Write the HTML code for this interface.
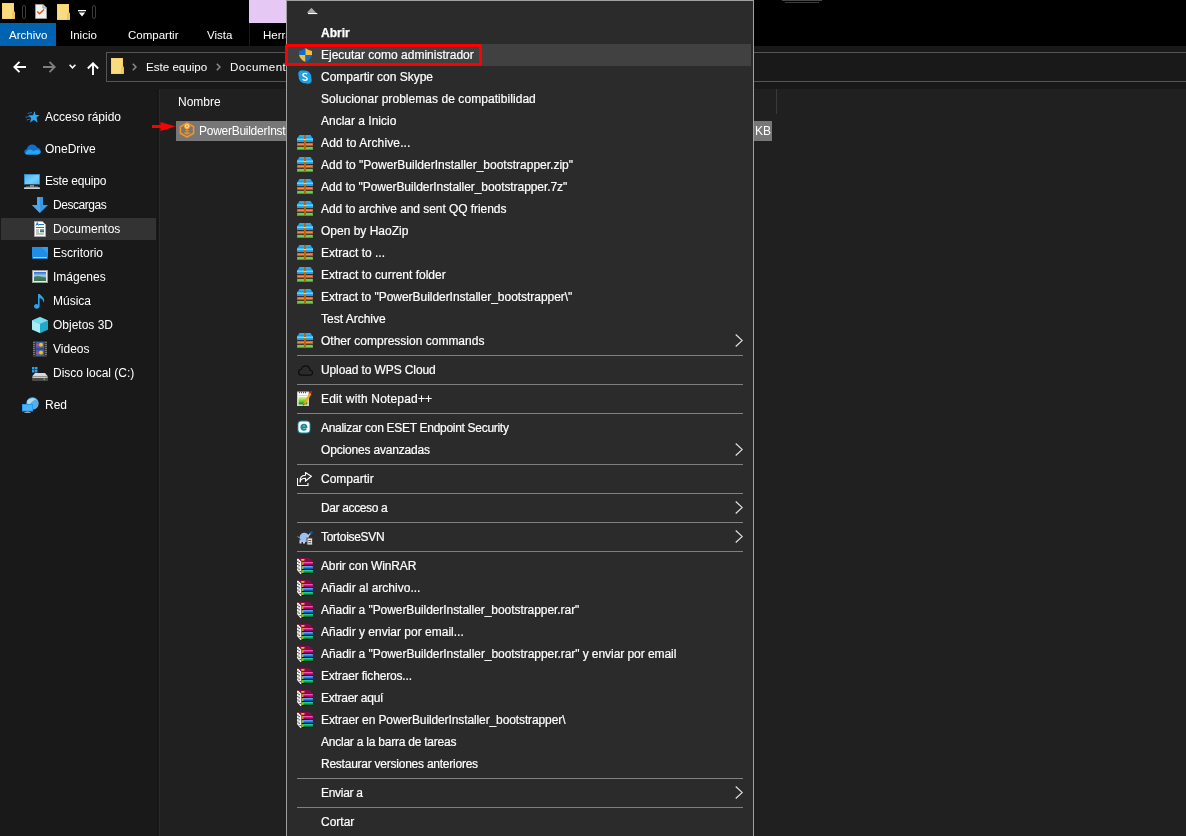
<!DOCTYPE html>
<html><head><meta charset="utf-8">
<style>
*{margin:0;padding:0;box-sizing:border-box}
html,body{width:1186px;height:836px;overflow:hidden;-webkit-font-smoothing:antialiased;background:#202020;font-family:"Liberation Sans",sans-serif;font-size:12px;color:#fff}
.a{position:absolute;will-change:transform}
#title{left:0;top:0;width:1186px;height:23px;background:#000}
#tabs{left:0;top:23px;width:1186px;height:23px;background:#000}
.tab{will-change:transform;position:absolute;top:24px;height:23px;line-height:23px;color:#fff;font-size:11.5px}
#nav{left:0;top:46px;width:1186px;height:43px;background:#191919}
#addr{left:106px;top:52px;width:1100px;height:30px;border:1px solid #555;background:#191919}
#side{left:0;top:89px;width:159px;height:747px;background:#191919}
#content{left:159px;top:89px;width:1027px;height:747px;background:#202020;border-left:1px solid #2a2a2a}
.si{will-change:transform;position:absolute;left:45px;margin-top:1px;height:22px;line-height:22px;color:#fff;white-space:nowrap}
#menu{left:286px;top:0;width:468px;height:840px;background:#2b2b2b;border:1px solid #a0a0a0;border-bottom:none}
.mi{-webkit-text-stroke:0.2px #fff;will-change:transform;position:absolute;left:321px;margin-top:1px;height:22px;line-height:22px;color:#fff;white-space:nowrap}
.sep{position:absolute;left:297px;width:446px;height:1px;background:#808080}
.ic{position:absolute;left:297px}
.chev{position:absolute;left:735px}
svg.i{position:absolute;overflow:visible}
</style></head><body>
<svg width="0" height="0" style="position:absolute">
<defs>
<symbol id="hz" viewBox="0 0 16 15">
<path d="M2.5 0H13.5L16 3.5V7H0V3.5Z" fill="#1e9ee0"/>
<rect x="0" y="3.5" width="16" height="1.6" fill="#6ad6ff"/>
<rect x="2.5" y="0.5" width="11" height="1" fill="#3cbcf0"/>
<rect x="0" y="7" width="16" height="0.8" fill="#1a1a1a" opacity=".5"/>
<rect x="0" y="7.8" width="16" height="3.4" fill="#d8432a"/>
<rect x="0.5" y="8.6" width="15" height="1.2" fill="#f59a5a"/>
<rect x="0" y="11.2" width="16" height="0.6" fill="#1a1a1a" opacity=".5"/>
<rect x="0" y="11.8" width="16" height="3.2" fill="#3aa82a"/>
<rect x="0.5" y="12.4" width="15" height="1.2" fill="#8ee860"/>
<rect x="7" y="0" width="2" height="15" fill="#b8660e"/>
<rect x="7" y="4" width="2" height="1.2" fill="#ffd040"/>
</symbol>
<symbol id="wr" viewBox="0 0 16 16">
<path d="M0 0.8L1.8 0.8L4.6 3.8V16H3.4L0 12Z" fill="#f4f4f4"/>
<path d="M0.3 3.3h1.1M1.6 4.6h1.1M0.3 6.6h1.1M1.6 7.8h1.1M0.3 10h1.1M1.6 11.2h1.1M2.6 13.6h1.1" stroke="#111" stroke-width="1"/>
<path d="M0.8 0H12.5L16 3.8H4.5Z" fill="#8c0846"/>
<ellipse cx="5.8" cy="1.8" rx="2" ry="0.9" fill="#d8dc00"/>
<rect x="4.5" y="3.8" width="11.5" height="3.4" fill="#a3005c"/>
<rect x="5.5" y="4.2" width="10.3" height="1.1" fill="#ff6ad0"/>
<rect x="4.5" y="7.2" width="11.5" height="0.8" fill="#050505"/>
<rect x="4.5" y="8" width="11.5" height="3.2" fill="#0b58b8"/>
<rect x="5.5" y="8.3" width="10.3" height="1.1" fill="#6cc8ff"/>
<rect x="4.5" y="11.2" width="11.5" height="0.8" fill="#050505"/>
<rect x="4.5" y="12" width="11.5" height="3.3" fill="#0a7c3c"/>
<rect x="5.5" y="12.3" width="10.3" height="1.1" fill="#38eca8"/>
<rect x="4.5" y="15.3" width="11.5" height="0.7" fill="#050505"/>
<path d="M5.8 4.4V7M5.8 8.5V11M5.8 12.5V15" stroke="#e0d400" stroke-width="1"/>
</symbol>
<symbol id="shield" viewBox="0 0 13 14">
<path d="M6.5 0L6.5 7H0V3Q3.5 2.5 6.5 0Z" fill="#0a6ed6"/>
<path d="M6.5 0Q9.5 2.5 13 3V7H6.5Z" fill="#fbbc2c"/>
<path d="M0 7H6.5V14Q1 11.5 0 7Z" fill="#fbbc2c"/>
<path d="M6.5 7H13Q12 11.5 6.5 14Z" fill="#0a6ed6"/>
</symbol>
<symbol id="skype" viewBox="0 0 14 14">
<path d="M4 0.3C5 0.3 5.6 0.7 6.3 0.6C10.5 0.3 13.6 3.8 13.2 8C13.5 8.7 13.8 9.2 13.8 10C13.8 12.2 12 13.8 10 13.8C9.2 13.8 8.6 13.5 8 13.2C3.8 13.6 0.4 10.3 0.7 6.2C0.5 5.5 0.2 4.8 0.2 4C0.2 1.9 1.9 0.3 4 0.3Z" fill="#1fa0e4"/>
<path d="M9.1 4.2C8.7 3.6 8 3.4 7 3.4C5.7 3.4 4.9 4.1 4.9 5.1C4.9 7.3 9.2 6.3 9.2 8.6C9.2 9.7 8.3 10.3 7 10.3C5.8 10.3 5 9.9 4.6 9.2" fill="none" stroke="#fff" stroke-width="1.35"/>
</symbol>
<symbol id="cloud" viewBox="0 0 14 10">
<path d="M3.2 9.3H11.2C12.6 9.3 13.5 8.3 13.5 7C13.5 5.7 12.5 4.7 11.2 4.8C10.9 2.3 9.2 0.7 7 0.7C5 0.7 3.6 2 3.2 3.8C1.6 3.9 0.5 5 0.5 6.6C0.5 8.1 1.7 9.3 3.2 9.3Z" fill="none" stroke="#0c0c0c" stroke-width="1.1"/>
</symbol>
<symbol id="npp" viewBox="0 0 15 15">
<rect x="0.5" y="1" width="11" height="13.5" fill="#fff" stroke="#cfcfcf" stroke-width="1"/>
<path d="M2 1.5h1M4 1.5h1M6 1.5h1M8 1.5h1" stroke="#555" stroke-width="1.4"/>
<rect x="1.5" y="4" width="9" height="1" fill="#c9d8ee"/>
<linearGradient id="npg" x1="0" y1="0" x2="0" y2="1"><stop offset="0" stop-color="#d8f590"/><stop offset=".6" stop-color="#5ccf20"/><stop offset="1" stop-color="#0b7a0b"/></linearGradient>
<rect x="1.5" y="6" width="9" height="7.5" fill="url(#npg)"/>
<path d="M7 13.5L13.5 2.5" stroke="#f5a300" stroke-width="2.2"/>
<path d="M6.3 14.5L7.2 12.6" stroke="#7a4a00" stroke-width="1"/>
<path d="M12.6 2.5L14 0.8" stroke="#8a8aa0" stroke-width="1.6"/>
<circle cx="14" cy="0.9" r="1.2" fill="#d01010"/>
</symbol>
<symbol id="eset" viewBox="0 0 14 14">
<rect x="0.5" y="0.5" width="13" height="13" rx="3.8" fill="#138aa0"/>
<rect x="1.4" y="1.4" width="11.2" height="11.2" rx="3" fill="#fff"/>
<path d="M4.6 7.3H9.4C9.5 5.6 8.6 4.6 7 4.6C5.5 4.6 4.4 5.7 4.4 7.2C4.4 8.7 5.4 9.7 7.1 9.7C8 9.7 8.7 9.4 9.2 8.9" fill="none" stroke="#138aa0" stroke-width="1.9"/>
</symbol>
<symbol id="share" viewBox="0 0 15 14">
<path d="M0.5 6V13.5H11V11" fill="none" stroke="#fff" stroke-width="1.1"/>
<path d="M3.2 10.5C3.2 7.5 5.2 6.3 8.5 6.3V9L14.3 4.3L8.5 0.5V3.2C4.5 3.2 2.5 6 3.2 10.5Z" fill="none" stroke="#fff" stroke-width="1.1" stroke-linejoin="miter"/>
</symbol>
<symbol id="svn" viewBox="0 0 16 14">
<path d="M0.5 5.5L3 7" stroke="#8fa0c0" stroke-width="1"/>
<ellipse cx="7.3" cy="6" rx="4.6" ry="4.3" fill="#9cc0f4"/>
<path d="M2.5 8.5H12V11H2.5Z" fill="#9cc0f4"/>
<rect x="2.5" y="10.5" width="2" height="2" fill="#cdd8ec"/>
<rect x="6" y="10.5" width="2" height="2" fill="#cdd8ec"/>
<rect x="9.5" y="6.5" width="6.5" height="7.5" fill="#4a4038"/>
<rect x="10.5" y="7.5" width="4.5" height="6" fill="#e8e8e8"/>
<rect x="11.3" y="9" width="3" height="1" fill="#555"/>
<rect x="11.3" y="11.2" width="3" height="1" fill="#555"/>
<path d="M10 6L14 2" stroke="#c0c8d8" stroke-width="1.2"/>
<circle cx="14.3" cy="1.6" r="1.5" fill="#0a5a9a"/>
</symbol>
<symbol id="fold" viewBox="0 0 14 16">
<rect x="0" y="0" width="12" height="16" fill="#f6d06a"/>
<rect x="0.8" y="0.8" width="10.4" height="14.4" fill="#f9db80"/>
<path d="M10.3 9.2L13 8.6V16H10.3Z" fill="#e8b94c"/>
<rect x="11" y="9.8" width="1.5" height="5.5" fill="#f4cc62"/>
</symbol>
<symbol id="tsep" viewBox="0 0 4 14">
<rect x="0.5" y="0.5" width="3" height="13" rx="1.5" fill="none" stroke="#3c3c3c" stroke-width="1"/>
</symbol>
<symbol id="tdoc" viewBox="0 0 12 15">
<path d="M0.5 0.5H8L11.5 4V14.5H0.5Z" fill="#f2f2f2" stroke="#9a9a9a" stroke-width="1"/>
<path d="M8 0.5V4H11.5" fill="#ddd" stroke="#9a9a9a" stroke-width="1"/>
<path d="M2.3 7.5L4.5 9.8L9 5.5" fill="none" stroke="#e8541a" stroke-width="1.4"/>
</symbol>
<symbol id="dd" viewBox="0 0 8 7">
<rect x="0" y="0" width="8" height="1.3" fill="#fff"/>
<path d="M0.8 2.5H7.2L4 6.5Z" fill="#fff"/>
</symbol>
<symbol id="back" viewBox="0 0 13 12">
<path d="M13 6H1.5M6.5 0.8L1.3 6L6.5 11.2" fill="none" stroke-width="1.9"/>
</symbol>
<symbol id="up" viewBox="0 0 12 13">
<path d="M6 13V1.5M0.8 6.5L6 1.3L11.2 6.5" fill="none" stroke="#fff" stroke-width="1.9"/>
</symbol>
<symbol id="cdown" viewBox="0 0 7 5">
<path d="M0.6 0.8L3.5 3.8L6.4 0.8" fill="none" stroke="#fff" stroke-width="1.5"/>
</symbol>
<symbol id="bc" viewBox="0 0 5 8">
<path d="M0.8 0.7L4 4L0.8 7.3" fill="none" stroke="#8a8a8a" stroke-width="1.5"/>
</symbol>
<symbol id="star" viewBox="0 0 15 12">
<path d="M9.5 0L10.7 4H14.6L11.5 6.5L12.6 11.8L8.8 8.8L5 11.8L6.2 7.2L3.4 4.3H8Z" fill="#2ba9f2"/>
<path d="M2.5 2.5L7 1.5M0.5 6.2L5 5.5M1.5 9L5.2 8" stroke="#1a7ec8" stroke-width="0.9"/>
</symbol>
<symbol id="od" viewBox="0 0 17 11">
<path d="M3.2 10.5C1.5 10.5 0.3 9.4 0.3 7.8C0.3 6.3 1.4 5.3 2.8 5.2C3.3 2.3 5.6 0.5 8.3 0.5C10.5 0.5 12.2 1.7 13 3.6C15 3.7 16.7 5.3 16.7 7.3C16.7 9.2 15.2 10.5 13.4 10.5Z" fill="#0f6fd0"/>
<path d="M1 9.8C1.8 10.3 2.4 10.5 3.2 10.5H13.4C15 10.5 16.4 9.5 16.7 7.8C16 6.5 14.7 5.7 13.2 5.7C11.5 5.7 10.5 6.6 9.6 7.4C8.7 6.6 7.5 5.6 5.8 5.6C3.8 5.6 2.5 7.2 1 9.8Z" fill="#2aa5ec"/>
</symbol>
<symbol id="pc" viewBox="0 0 16 15">
<linearGradient id="pcg" x1="0" y1="0" x2="1" y2="1"><stop offset="0" stop-color="#3fb0f5"/><stop offset=".55" stop-color="#78cdfa"/><stop offset="1" stop-color="#4ab6f7"/></linearGradient>
<rect x="0.3" y="0.3" width="15.4" height="10.2" fill="url(#pcg)" stroke="#2a8fd8" stroke-width=".6"/>
<rect x="0" y="10.5" width="16" height="0.8" fill="#2a2a2a"/>
<rect x="6" y="11.3" width="4" height="1.2" fill="#bfbfbf"/>
<rect x="2" y="12.5" width="12" height="0.8" fill="#8a8a8a"/>
<rect x="0" y="13.3" width="16" height="1.7" rx=".6" fill="#d0d0d0"/>
</symbol>
<symbol id="dl" viewBox="0 0 16 16">
<path d="M5 0H11V8H16L8 16L0 8H5Z" fill="#3597e6"/>
<path d="M5 0H8V16L0 8H5Z" fill="#4aa6ee"/>
</symbol>
<symbol id="docs" viewBox="0 0 12 16">
<path d="M0.5 0.5H8.5L11.5 3.5V15.5H0.5Z" fill="#fff" stroke="#a8a8a8" stroke-width="1"/>
<path d="M2 4.5L3.3 1.5L4.6 4.5M2.5 3.5H4" fill="none" stroke="#1a78d0" stroke-width="1"/>
<rect x="5" y="3" width="5" height="1" fill="#1a78d0"/>
<rect x="2" y="6" width="8" height="1" fill="#1a78d0"/>
<rect x="2" y="8.5" width="3" height="1" fill="#888"/>
<rect x="6" y="8.3" width="4" height="3" fill="#3c7850"/>
<rect x="6" y="8.3" width="4" height="1.2" fill="#6aaedc"/>
<rect x="2" y="10.5" width="3" height="1" fill="#888"/>
<rect x="2" y="12.5" width="8" height="1" fill="#888"/>
</symbol>
<symbol id="desk" viewBox="0 0 16 12">
<rect x="0" y="0" width="16" height="12" fill="#1e8ee8"/>
<path d="M9 0H16V7Z" fill="#38a8f4" opacity=".6"/>
<rect x="0" y="10" width="16" height="2" fill="#0f6ec0"/>
<rect x="1" y="10.3" width="14" height="0.8" fill="#e8f4ff"/>
</symbol>
<symbol id="img" viewBox="0 0 16 13">
<rect x="0.5" y="0.5" width="15" height="12" fill="#e8e8e8" stroke="#9a9a9a" stroke-width="1"/>
<linearGradient id="skg" x1="0" y1="0" x2="0" y2="1"><stop offset="0" stop-color="#2a6ad0"/><stop offset=".45" stop-color="#a8d0f0"/><stop offset=".6" stop-color="#5a9a6a"/><stop offset="1" stop-color="#1a4a3a"/></linearGradient>
<rect x="2" y="2" width="12" height="9" fill="url(#skg)"/>
<path d="M2 7C5 5 8 6 14 8V11H2Z" fill="#3a7a5a" opacity=".8"/>
</symbol>
<symbol id="music" viewBox="0 0 12 16">
<path d="M4 1V11.5C3.5 11.2 3 11 2.3 11C1 11 0 12 0 13.3C0 14.6 1.2 15.7 2.7 15.7C4.3 15.7 5.6 14.5 5.6 13V5C7.5 5.5 9.5 7 9.8 9.8C11.5 6 8.5 3.5 5.6 1Z" fill="#2aa2ee"/>
</symbol>
<symbol id="cube" viewBox="0 0 16 16">
<path d="M8 0L16 3.5V12.5L8 16L0 12.5V3.5Z" fill="#3cc0d8"/>
<path d="M0 3.5L8 7V16L0 12.5Z" fill="#a8ecf4"/>
<path d="M8 0L16 3.5L8 7L0 3.5Z" fill="#7adcec"/>
<path d="M8 7L16 3.5V12.5L8 16Z" fill="#22a8c8"/>
</symbol>
<symbol id="vid" viewBox="0 0 14 16">
<rect x="0" y="0" width="14" height="16" fill="#3a3a3a"/>
<path d="M1 1v14M13 1v14" stroke="#9a9a9a" stroke-width="1.2" stroke-dasharray="1 1"/>
<rect x="3" y="1" width="8" height="6.5" fill="#3a60c0"/>
<rect x="3" y="8.5" width="8" height="6.5" fill="#3a60c0"/>
<circle cx="8" cy="3.8" r="2" fill="#f0c020"/>
<circle cx="8" cy="11.5" r="2" fill="#f0c020"/>
<rect x="3.5" y="3" width="2.5" height="2" fill="#e04a30"/>
<rect x="3.5" y="11" width="2.5" height="2" fill="#e04a30"/>
</symbol>
<symbol id="disk" viewBox="0 0 16 14">
<rect x="0" y="0" width="2.5" height="2.5" fill="#29a0f0"/><rect x="3" y="0" width="2.5" height="2.5" fill="#29a0f0"/>
<rect x="0" y="3" width="2.5" height="2.5" fill="#29a0f0"/><rect x="3" y="3" width="2.5" height="2.5" fill="#29a0f0"/>
<path d="M3 6H13L16 9.5H0Z" fill="#d8d8d8"/>
<rect x="0" y="9.5" width="16" height="4.5" rx=".8" fill="#4a4a4a"/>
<rect x="0.5" y="9.5" width="15" height="1.5" fill="#c8c8c8"/>
<rect x="11.5" y="11.5" width="1.6" height="1.4" fill="#30d050"/>
</symbol>
<symbol id="net" viewBox="0 0 18 16">
<circle cx="10.5" cy="6.5" r="6.2" fill="#5aaee6"/>
<path d="M5 4C7 1.5 11 0.5 14 2C12 3 9 5 7 8C5.5 7 5 5.5 5 4Z" fill="#a8dcf8"/>
<rect x="0" y="7" width="11" height="7.5" fill="#2a9af0"/>
<rect x="1" y="8" width="9" height="5.5" fill="#4ab4f8"/>
<rect x="4.5" y="14.5" width="2" height="0.8" fill="#bbb"/>
<rect x="2.5" y="15.2" width="6" height="0.8" fill="#bbb"/>
</symbol>
<symbol id="pb" viewBox="0 0 16 16">
<path d="M8 1L14.6 4.7V11.3L8 15L1.4 11.3V4.7Z" fill="none" stroke="#f7941d" stroke-width="1.6"/>
<circle cx="8" cy="4.2" r="3" fill="#f7941d"/>
<circle cx="8" cy="4.2" r="2.2" fill="#fde2c0"/>
<path d="M6.8 5.5L8 2.8L9.2 5.5M7.3 4.7H8.7" fill="none" stroke="#f7941d" stroke-width=".8"/>
<path d="M8 7.2V12.5M5.5 10.5Q8 13 10.5 10.5M6.5 8.5H9.5" fill="none" stroke="#f7941d" stroke-width="1.1"/>
</symbol>
<symbol id="chev" viewBox="0 0 8 13">
<path d="M0.7 0.5L7.3 6.5L0.7 12.5" fill="none" stroke="#e6e6e6" stroke-width="1.1"/>
</symbol>
</defs>
</svg>
<div id="title" class="a"></div>
<div id="tabs" class="a"></div>
<div class="a" style="left:0;top:23px;width:56px;height:23px;background:#0063b1"></div>
<div class="tab" style="left:9px">Archivo</div>
<div class="tab" style="left:70px">Inicio</div>
<div class="tab" style="left:128px">Compartir</div>
<div class="tab" style="left:207px">Vista</div>
<div class="a" style="left:249px;top:23px;width:1px;height:23px;background:#1a1a1a"></div>
<div class="tab" style="left:263px">Herramientas</div>
<div class="a" style="left:249px;top:0;width:40px;height:23px;background:#e6c8f5"></div>
<div id="nav" class="a"></div>
<div id="addr" class="a"></div>
<div class="a" style="left:146px;top:58px;line-height:18px;font-size:11.6px">Este equipo</div>
<div class="a" style="left:230px;top:58px;line-height:18px;font-size:11.6px;letter-spacing:0.42px">Documentos</div>
<div id="side" class="a"></div>
<div id="content" class="a"></div>
<div class="a" style="left:178px;top:91px;line-height:22px">Nombre</div>
<div class="a" style="left:176px;top:121px;width:596px;height:20px;background:#777"></div>
<div class="a" style="left:199px;top:121px;line-height:20px;letter-spacing:-0.27px">PowerBuilderInstaller_bootstrapper.exe</div>
<div class="a" style="left:755px;top:121px;line-height:20px">KB</div>
<div class="a" style="left:776px;top:89px;width:1px;height:25px;background:#3a3a3a"></div>
<div class="a" style="left:782px;top:0;width:40px;height:1px;background:#454545"></div>
<div class="a" style="left:785px;top:2px;width:34px;height:1px;background:#3a3a3a"></div>
<div class="a" style="left:157px;top:89px;width:1px;height:747px;background:#151515"></div>
<!-- sidebar -->
<div class="a" style="left:1px;top:218px;width:155px;height:22px;background:#333"></div>
<div class="si" style="top:105px">Acceso rápido</div>
<div class="si" style="top:137px">OneDrive</div>
<div class="si" style="top:169px;letter-spacing:-0.2px">Este equipo</div>
<div class="si" style="left:53px;top:193px;letter-spacing:-0.45px">Descargas</div>
<div class="si" style="left:53px;top:217px">Documentos</div>
<div class="si" style="left:53px;top:241px">Escritorio</div>
<div class="si" style="left:53px;top:265px">Imágenes</div>
<div class="si" style="left:53px;top:289px">Música</div>
<div class="si" style="left:53px;top:313px">Objetos 3D</div>
<div class="si" style="left:53px;top:337px">Videos</div>
<div class="si" style="left:53px;top:361px">Disco local (C:)</div>
<div class="si" style="top:393px">Red</div>

<!-- explorer icons -->
<svg class="i" style="left:2px;top:3px" width="14" height="16"><use href="#fold"/></svg>
<svg class="i" style="left:22px;top:5px" width="4" height="14"><use href="#tsep"/></svg>
<svg class="i" style="left:35px;top:4px" width="12" height="15"><use href="#tdoc"/></svg>
<svg class="i" style="left:57px;top:4px" width="14" height="16"><use href="#fold"/></svg>
<svg class="i" style="left:78px;top:10px" width="8" height="7"><use href="#dd"/></svg>
<svg class="i" style="left:92px;top:5px" width="4" height="14"><use href="#tsep"/></svg>
<svg class="i" style="left:13px;top:61px" width="13" height="12"><use href="#back" stroke="#fff"/></svg>
<svg class="i" style="left:43px;top:61px;transform:scaleX(-1)" width="13" height="12"><use href="#back" stroke="#808080"/></svg>
<svg class="i" style="left:69px;top:64px" width="7" height="5"><use href="#cdown"/></svg>
<svg class="i" style="left:87px;top:62px" width="12" height="13"><use href="#up"/></svg>
<svg class="i" style="left:111px;top:58px" width="14" height="16"><use href="#fold"/></svg>
<svg class="i" style="left:132px;top:63px" width="5" height="8"><use href="#bc"/></svg>
<svg class="i" style="left:216px;top:63px" width="5" height="8"><use href="#bc"/></svg>
<svg class="i" style="left:25px;top:111px" width="15" height="12"><use href="#star"/></svg>
<svg class="i" style="left:24px;top:144px" width="17" height="11"><use href="#od"/></svg>
<svg class="i" style="left:24px;top:174px" width="16" height="15"><use href="#pc"/></svg>
<svg class="i" style="left:32px;top:197px" width="16" height="16"><use href="#dl"/></svg>
<svg class="i" style="left:34px;top:221px" width="12" height="16"><use href="#docs"/></svg>
<svg class="i" style="left:32px;top:247px" width="16" height="12"><use href="#desk"/></svg>
<svg class="i" style="left:32px;top:270px" width="16" height="13"><use href="#img"/></svg>
<svg class="i" style="left:34px;top:293px" width="12" height="16"><use href="#music"/></svg>
<svg class="i" style="left:32px;top:317px" width="16" height="16"><use href="#cube"/></svg>
<svg class="i" style="left:33px;top:341px" width="14" height="16"><use href="#vid"/></svg>
<svg class="i" style="left:32px;top:367px" width="16" height="14"><use href="#disk"/></svg>
<svg class="i" style="left:22px;top:397px" width="18" height="16"><use href="#net"/></svg>
<svg class="i" style="left:179px;top:122px" width="16" height="16"><use href="#pb"/></svg>
<svg class="i" style="left:151px;top:121px" width="26" height="11"><path d="M1 4H9.5V1L24.5 5.5L9.5 10V7H1Z" fill="#f00"/></svg>
<!-- menu -->
<div id="menu" class="a"></div>
<div class="a" style="left:288px;top:44px;width:463px;height:22px;background:#414141"></div>
<div class="mi" style="top:21px;font-weight:bold;-webkit-text-stroke:0.25px #fff">Abrir</div>
<div class="mi" style="top:43px">Ejecutar como administrador</div>
<div class="mi" style="top:65px">Compartir con Skype</div>
<div class="mi" style="top:87px;letter-spacing:0.054px">Solucionar problemas de compatibilidad</div>
<div class="mi" style="top:109px">Anclar a Inicio</div>
<div class="mi" style="top:131px;letter-spacing:0.125px">Add to Archive...</div>
<div class="mi" style="top:153px">Add to "PowerBuilderInstaller_bootstrapper.zip"</div>
<div class="mi" style="top:175px;letter-spacing:-0.067px">Add to "PowerBuilderInstaller_bootstrapper.7z"</div>
<div class="mi" style="top:197px;letter-spacing:-0.061px">Add to archive and sent QQ friends</div>
<div class="mi" style="top:219px">Open by HaoZip</div>
<div class="mi" style="top:241px">Extract to ...</div>
<div class="mi" style="top:263px">Extract to current folder</div>
<div class="mi" style="top:285px;letter-spacing:-0.043px">Extract to "PowerBuilderInstaller_bootstrapper\"</div>
<div class="mi" style="top:307px">Test Archive</div>
<div class="mi" style="top:329px">Other compression commands</div>
<div class="sep" style="top:355px"></div>
<div class="mi" style="top:358px;letter-spacing:-0.111px">Upload to WPS Cloud</div>
<div class="sep" style="top:384px"></div>
<div class="mi" style="top:387px;letter-spacing:0.167px">Edit with Notepad++</div>
<div class="sep" style="top:413px"></div>
<div class="mi" style="top:416px;letter-spacing:-0.294px">Analizar con ESET Endpoint Security</div>
<div class="mi" style="top:438px;letter-spacing:-0.176px">Opciones avanzadas</div>
<div class="sep" style="top:464px"></div>
<div class="mi" style="top:467px">Compartir</div>
<div class="sep" style="top:493px"></div>
<div class="mi" style="top:496px;letter-spacing:-0.364px">Dar acceso a</div>
<div class="sep" style="top:522px"></div>
<div class="mi" style="top:525px;letter-spacing:-0.300px">TortoiseSVN</div>
<div class="sep" style="top:551px"></div>
<div class="mi" style="top:554px;letter-spacing:-0.133px">Abrir con WinRAR</div>
<div class="mi" style="top:576px">Añadir al archivo...</div>
<div class="mi" style="top:598px;letter-spacing:-0.062px">Añadir a "PowerBuilderInstaller_bootstrapper.rar"</div>
<div class="mi" style="top:620px">Añadir y enviar por email...</div>
<div class="mi" style="top:642px;letter-spacing:-0.060px">Añadir a "PowerBuilderInstaller_bootstrapper.rar" y enviar por email</div>
<div class="mi" style="top:664px;letter-spacing:-0.167px">Extraer ficheros...</div>
<div class="mi" style="top:686px;letter-spacing:-0.273px">Extraer aquí</div>
<div class="mi" style="top:708px;letter-spacing:-0.111px">Extraer en PowerBuilderInstaller_bootstrapper\</div>
<div class="mi" style="top:730px;letter-spacing:-0.231px">Anclar a la barra de tareas</div>
<div class="mi" style="top:752px;letter-spacing:-0.241px">Restaurar versiones anteriores</div>
<div class="sep" style="top:778px"></div>
<div class="mi" style="top:781px;letter-spacing:-0.286px">Enviar a</div>
<div class="sep" style="top:807px"></div>
<div class="mi" style="top:810px">Cortar</div>


<!-- menu icons -->
<svg class="i" style="left:306px;top:7px" width="12" height="8"><path d="M0.8 5.8L5.5 0.7L10.5 6.2Z" fill="#a6a6a6"/><rect x="2" y="6" width="9.3" height="1.1" fill="#fff"/></svg>
<svg class="i" style="left:297px;top:135px" width="16" height="15"><use href="#hz"/></svg>
<svg class="i" style="left:297px;top:157px" width="16" height="15"><use href="#hz"/></svg>
<svg class="i" style="left:297px;top:179px" width="16" height="15"><use href="#hz"/></svg>
<svg class="i" style="left:297px;top:201px" width="16" height="15"><use href="#hz"/></svg>
<svg class="i" style="left:297px;top:223px" width="16" height="15"><use href="#hz"/></svg>
<svg class="i" style="left:297px;top:245px" width="16" height="15"><use href="#hz"/></svg>
<svg class="i" style="left:297px;top:267px" width="16" height="15"><use href="#hz"/></svg>
<svg class="i" style="left:297px;top:289px" width="16" height="15"><use href="#hz"/></svg>
<svg class="i" style="left:297px;top:333px" width="16" height="15"><use href="#hz"/></svg>
<svg class="i" style="left:297px;top:558px" width="16" height="16"><use href="#wr"/></svg>
<svg class="i" style="left:297px;top:580px" width="16" height="16"><use href="#wr"/></svg>
<svg class="i" style="left:297px;top:602px" width="16" height="16"><use href="#wr"/></svg>
<svg class="i" style="left:297px;top:624px" width="16" height="16"><use href="#wr"/></svg>
<svg class="i" style="left:297px;top:646px" width="16" height="16"><use href="#wr"/></svg>
<svg class="i" style="left:297px;top:668px" width="16" height="16"><use href="#wr"/></svg>
<svg class="i" style="left:297px;top:690px" width="16" height="16"><use href="#wr"/></svg>
<svg class="i" style="left:297px;top:712px" width="16" height="16"><use href="#wr"/></svg>
<svg class="i" style="left:735px;top:334px" width="8" height="13"><use href="#chev"/></svg>
<svg class="i" style="left:735px;top:443px" width="8" height="13"><use href="#chev"/></svg>
<svg class="i" style="left:735px;top:501px" width="8" height="13"><use href="#chev"/></svg>
<svg class="i" style="left:735px;top:530px" width="8" height="13"><use href="#chev"/></svg>
<svg class="i" style="left:735px;top:786px" width="8" height="13"><use href="#chev"/></svg>
<svg class="i" style="left:299px;top:48px" width="13" height="14"><use href="#shield"/></svg>
<svg class="i" style="left:298px;top:70px" width="14" height="14"><use href="#skype"/></svg>
<svg class="i" style="left:298px;top:365px" width="15" height="11"><use href="#cloud"/></svg>
<svg class="i" style="left:297px;top:391px" width="15" height="15"><use href="#npp"/></svg>
<svg class="i" style="left:297px;top:420px" width="14" height="14"><use href="#eset"/></svg>
<svg class="i" style="left:297px;top:472px" width="15" height="14"><use href="#share"/></svg>
<svg class="i" style="left:297px;top:531px" width="16" height="14"><use href="#svn"/></svg>
<!-- /menu icons -->
<div class="a" style="left:285px;top:44px;width:197px;height:22px;border:3px solid #f00;border-radius:2px"></div>
</body></html>
